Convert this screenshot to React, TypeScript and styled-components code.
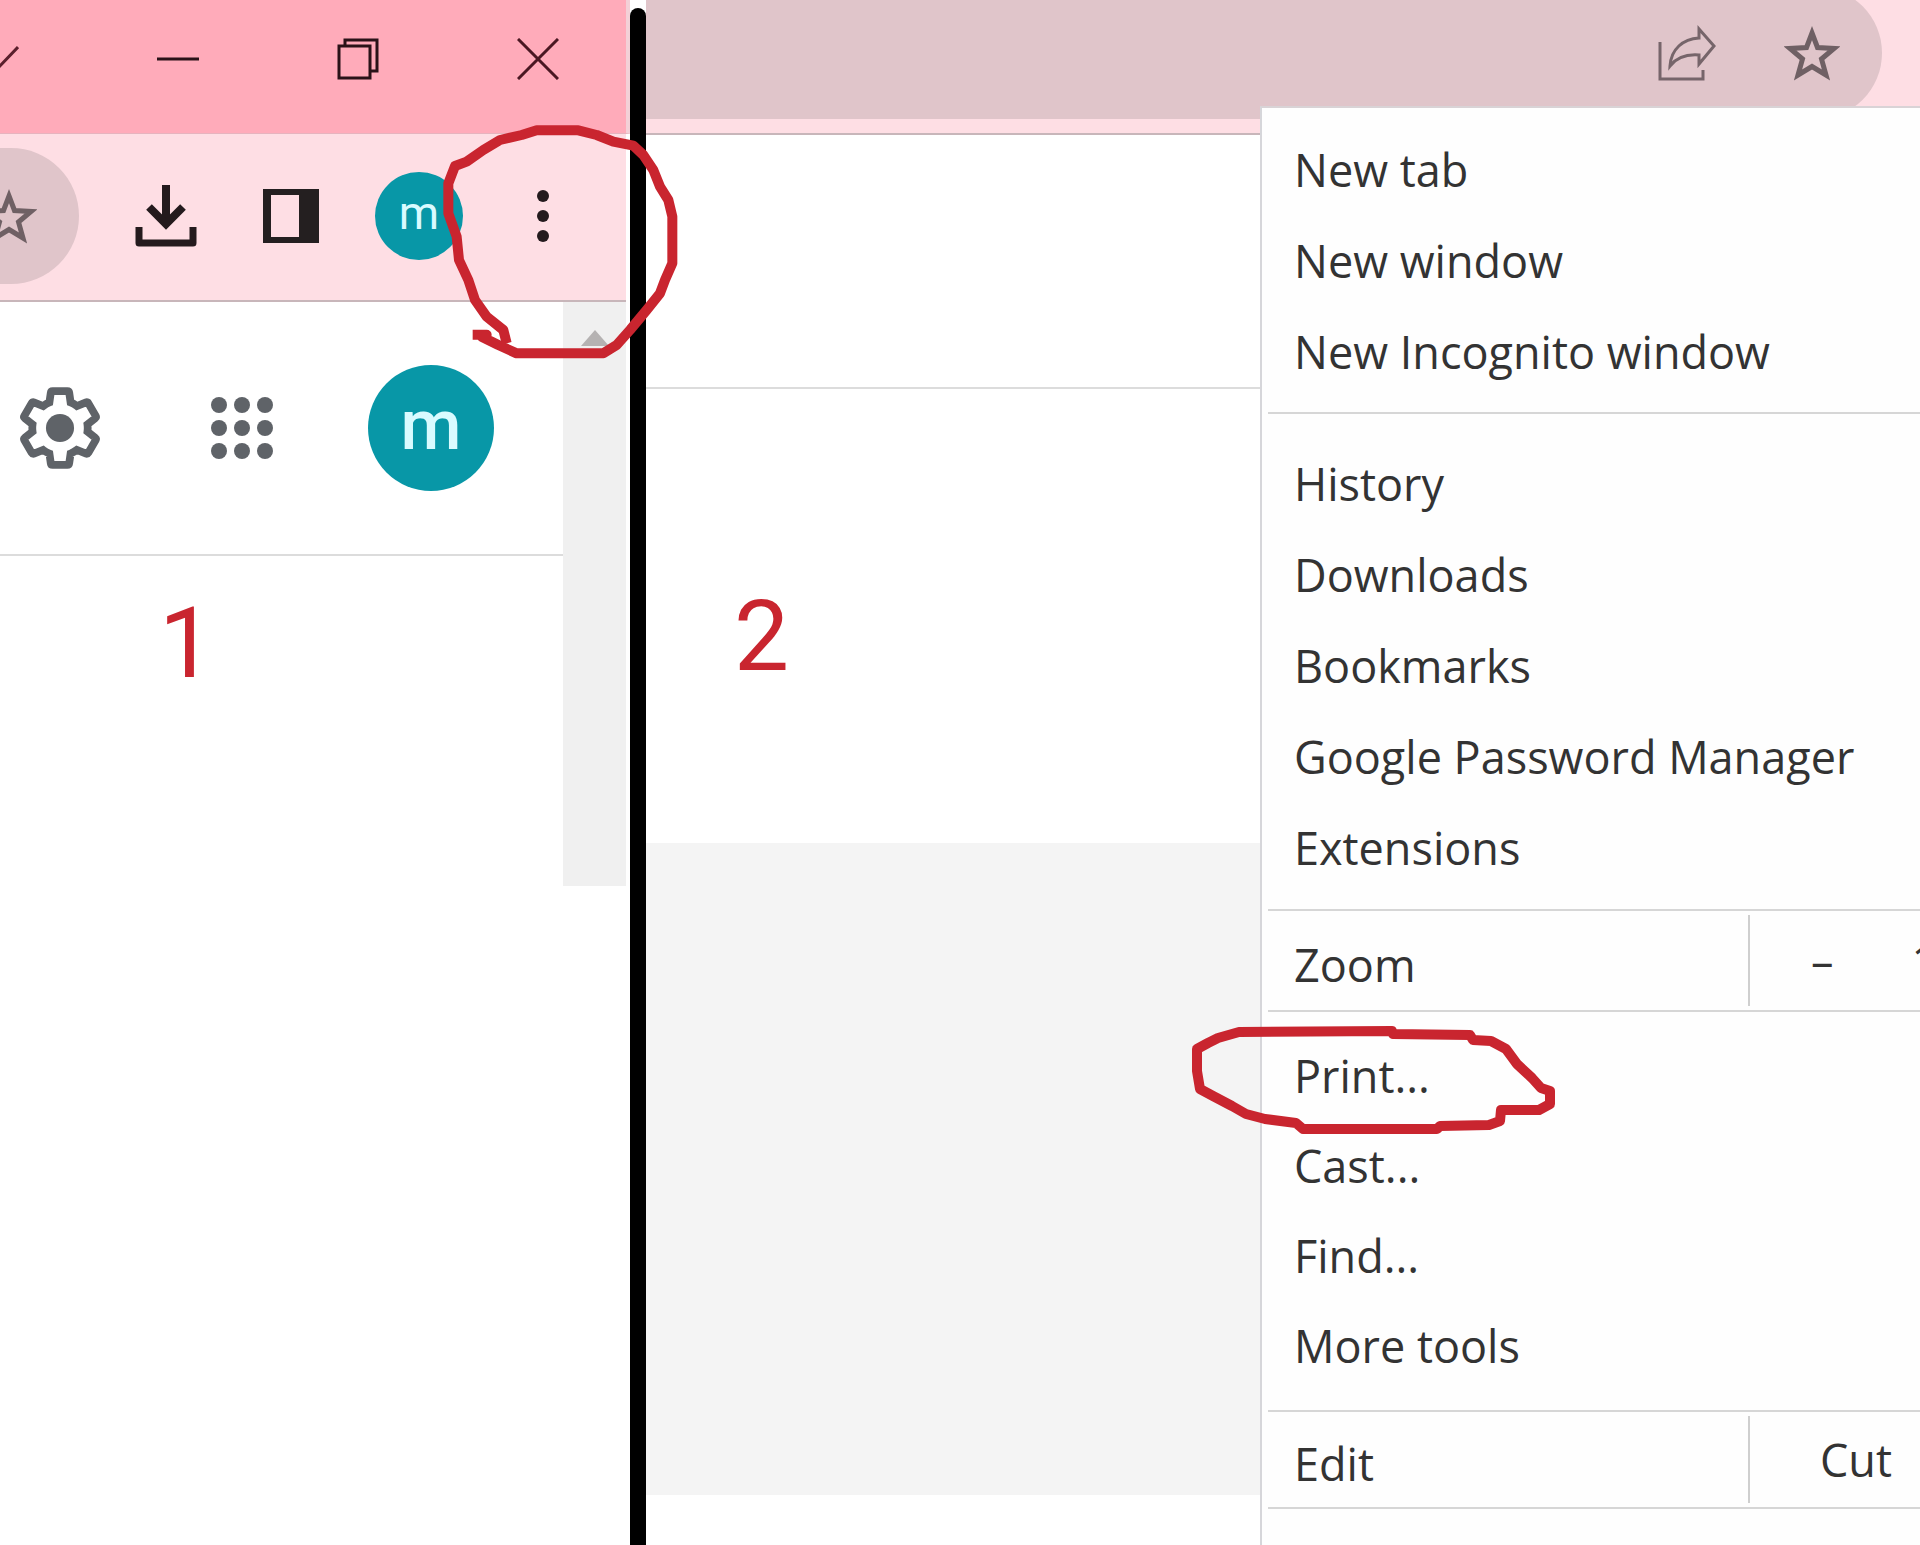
import React from "react";
import styled, { createGlobalStyle } from "styled-components";

const ink = "#c9252f";
const uiFont = `"Open Sans", "Noto Sans", sans-serif`;
const labelFont = `Roboto, "Liberation Sans", sans-serif`;

const GlobalStyle = createGlobalStyle`
  * { box-sizing: border-box; }
  body { margin: 0; background: #fff; overflow-x: hidden; }
  button { appearance: none; border: 0; padding: 0; margin: 0; background: none; color: inherit; font: inherit; cursor: pointer; }
  svg { display: block; flex: none; }
`;

const Page = styled.div`
  display: grid;
  grid-template-columns: 630fr 16px 1274fr;
  min-height: 100vh;
  overflow: hidden;
  font-family: ${uiFont};
  color: #333;
`;

const Pane = styled.section`
  position: relative;
  display: flex;
  flex-direction: column;
  min-width: 0;
`;

const Divider = styled.div`
  margin-top: 8px;
  border-radius: 8px 8px 0 0;
  background: #000;
`;

const TitleBar = styled.div`
  display: flex;
  justify-content: flex-end;
  align-items: center;
  gap: 138px;
  height: 134px;
  padding: 0 67px 16px 0;
  overflow: hidden;
  background: #ffabba;
  border-right: 4px solid #f3d0d7;
  border-bottom: 1px solid #e6b3be;
`;

const IconButton = styled.button<{ $width: number }>`
  display: flex;
  flex: none;
  justify-content: center;
  align-items: center;
  width: ${(p) => p.$width}px;
`;

const Toolbar = styled.div`
  display: flex;
  justify-content: flex-end;
  align-items: center;
  gap: 56px;
  height: 168px;
  margin-right: 4px;
  padding: 0 59px 2px 0;
  overflow: hidden;
  background: #fedee4;
  border-bottom: 2px solid #c8b6ba;
`;

const Pill = styled.div<{ $height: number; $gap?: number }>`
  display: flex;
  flex: 1 0 160px;
  justify-content: flex-end;
  align-items: center;
  gap: ${(p) => p.$gap ?? 0}px;
  height: ${(p) => p.$height}px;
  padding-right: 42px;
  border-radius: 0 68px 68px 0;
  background: #e0c5ca;
`;

const Avatar = styled.button<{ $size: number; $text: number; $weight: number }>`
  display: flex;
  flex: none;
  justify-content: center;
  align-items: center;
  width: ${(p) => p.$size}px;
  height: ${(p) => p.$size}px;
  padding-bottom: 6px;
  border-radius: 50%;
  background: #0897a7;
  color: #d9fbff;
  font: ${(p) => p.$weight} ${(p) => p.$text}px ${labelFont};
`;

const Viewport = styled.div`
  display: grid;
  grid-template-columns: 1fr 63px;
  align-items: start;
  margin-right: 4px;
`;

const AppHeader = styled.header`
  display: flex;
  justify-content: flex-end;
  align-items: center;
  gap: 70px;
  height: 254px;
  padding-right: 69px;
  overflow: hidden;
  border-bottom: 2px solid #dcdcdc;
`;

const ScrollTrack = styled.div`
  display: flex;
  justify-content: center;
  height: 584px;
  padding-top: 28px;
  background: #f0f0f0;
`;

const Step = styled.p<{ $top: number; $left: number }>`
  margin: 0;
  padding: ${(p) => p.$top}px 0 0 ${(p) => p.$left}px;
  color: ${ink};
  font: 400 98px/96px ${labelFont};
`;

const AddressBar = styled.div`
  display: flex;
  align-items: flex-end;
  height: 135px;
  padding: 0 38px 14px 0;
  overflow: hidden;
  background: #fedee4;
  border-bottom: 2px solid #c8b6ba;
`;

const SiteHeader = styled.div`
  height: 254px;
  border-bottom: 2px solid #dcdcdc;
`;

const SiteBody = styled.div`
  height: 454px;
`;

const SiteBand = styled.div`
  height: 652px;
  background: #f4f4f4;
`;

const Menu = styled.nav`
  position: absolute;
  top: 106px;
  right: 0;
  bottom: 0;
  width: 660px;
  background: #fefefe;
  border-top: 2px solid #d9d3d6;
  border-left: 2px solid #d6d6da;
  font-size: 45px;
  line-height: 64px;
`;

const Group = styled.div<{ $row: number; $pad: string }>`
  display: grid;
  grid-auto-rows: ${(p) => p.$row}px;
  padding: ${(p) => p.$pad};
`;

const Item = styled.button`
  position: relative;
  padding: 4px 0 0 32px;
  text-align: left;
  white-space: nowrap;
`;

const Rule = styled.hr`
  height: 2px;
  margin: 0 0 0 6px;
  border: 0;
  background: #d6d6d6;
`;

const SplitRow = styled.div<{ $height: number }>`
  display: grid;
  grid-template-columns: 486px 1fr;
  height: ${(p) => p.$height}px;
  padding: 4px 0;
`;

const SplitLabel = styled.span`
  align-self: center;
  padding: 8px 0 0 32px;
`;

const SplitCell = styled.div<{ $indent: number }>`
  display: flex;
  align-items: center;
  gap: 78px;
  padding-left: ${(p) => p.$indent}px;
  overflow: hidden;
  border-left: 2px solid #cfcfcf;
  white-space: nowrap;
`;

const MoreMark = styled.svg`
  position: absolute;
  top: 120px;
  right: -50px;
  z-index: 2;
  pointer-events: none;
`;

const PrintMark = styled.svg`
  position: absolute;
  top: -8px;
  left: -72px;
  pointer-events: none;
`;

const Star = ({ weight }: { weight: number }) => (
  <svg width="56" height="56" viewBox="0 0 56 56" fill="none" stroke="#6f6064" strokeWidth={weight}>
    <path d="M28 8 33.500 22.500 50 23.500 37.500 34 42 50 28 41.500 14 50 18.500 34 6 23.500 22.500 22.500Z" />
  </svg>
);

const gearPath =
  "M19.43 12.98c.04-.32.07-.64.07-.98 0-.34-.03-.66-.07-.98l2.11-1.65c.19-.15.24-.42.12-.64l-2-3.46c-.09-.16-.26-.25-.44-.25-.06 0-.12.01-.17.03l-2.49 1c-.52-.4-1.08-.73-1.69-.98l-.38-2.65C14.46 2.18 14.25 2 14 2h-4c-.25 0-.46.18-.49.42l-.38 2.65c-.61.25-1.17.59-1.69.98l-2.49-1c-.06-.02-.12-.03-.18-.03-.17 0-.34.09-.43.25l-2 3.46c-.13.22-.07.49.12.64l2.11 1.65c-.04.32-.07.65-.07.98 0 .33.03.66.07.98l-2.11 1.65c-.19.15-.24.42-.12.64l2 3.46c.09.16.26.25.44.25.06 0 .12-.01.17-.03l2.49-1c.52.4 1.08.73 1.69.98l.38 2.65c.03.24.24.42.49.42h4c.25 0 .46-.18.49-.42l.38-2.65c.61-.25 1.17-.59 1.69-.98l2.49 1c.06.02.12.03.18.03.17 0 .34-.09.43-.25l2-3.46c.12-.22.07-.49-.12-.64l-2.11-1.65z";

const dots = [9, 32, 55];

export default function App() {
  return (
    <>
      <GlobalStyle />
      <Page>
        <Pane>
          <TitleBar>
            <IconButton $width={42} aria-label="Search tabs">
              <svg width="42" height="42" viewBox="0 0 42 42" fill="none" stroke="#5a1f2c" strokeWidth="3">
                <path d="M1 9 21 30 41 9" />
              </svg>
            </IconButton>
            <IconButton $width={42} aria-label="Minimize">
              <svg width="42" height="42" viewBox="0 0 42 42" stroke="#2a1218" strokeWidth="3">
                <path d="M0 21H42" />
              </svg>
            </IconButton>
            <IconButton $width={42} aria-label="Restore">
              <svg width="42" height="42" viewBox="0 0 42 42" fill="none" stroke="#2a1218" strokeWidth="3">
                <path d="M2 8H33V40H2ZM8 8V2H40V33H33" />
              </svg>
            </IconButton>
            <IconButton $width={42} aria-label="Close">
              <svg width="42" height="42" viewBox="0 0 42 42" stroke="#4a1722" strokeWidth="3">
                <path d="M1 1 41 41M41 1 1 41" />
              </svg>
            </IconButton>
          </TitleBar>

          <Toolbar>
            <Pill $height={136}>
              <IconButton $width={56} aria-label="Bookmark this tab">
                <Star weight={5} />
              </IconButton>
            </Pill>
            <IconButton $width={72} aria-label="Downloads">
              <svg width="72" height="64" viewBox="0 0 72 64" fill="none" stroke="#241a1d" strokeWidth="8">
                <path d="M31 1V38" />
                <path d="M14 23 31 40 48 23" />
                <path d="M4 43V59H58V43" strokeWidth="7" strokeLinejoin="round" />
              </svg>
            </IconButton>
            <IconButton $width={56} aria-label="Side panel">
              <svg width="56" height="54" viewBox="0 0 56 54">
                <path fill="#241f20" fillRule="evenodd" d="M0 0H56V54H0ZM8 6V48H36V6Z" />
              </svg>
            </IconButton>
            <Avatar $size={88} $text={46} $weight={400} aria-label="Profile">m</Avatar>
            <IconButton $width={48} aria-label="Customize and control">
              <svg width="48" height="54" viewBox="0 0 48 54" fill="#241a1d">
                <circle cx="24" cy="7" r="6" />
                <circle cx="24" cy="27" r="6" />
                <circle cx="24" cy="47" r="6" />
              </svg>
            </IconButton>
          </Toolbar>

          <Viewport>
            <div>
              <AppHeader>
                <IconButton $width={112} aria-label="Settings">
                  <svg width="82" height="82" viewBox="0.9 0.9 22.2 22.2">
                    <path d={gearPath} fill="none" stroke="#5f6368" strokeWidth="2.1" />
                    <circle cx="12" cy="12" r="3.8" fill="#5f6368" />
                  </svg>
                </IconButton>
                <IconButton $width={112} aria-label="Apps">
                  <svg width="64" height="64" viewBox="0 0 64 64" fill="#5f6368">
                    {dots.map((y) => dots.map((x) => <circle key={`${x}-${y}`} cx={x} cy={y} r="8" />))}
                  </svg>
                </IconButton>
                <Avatar $size={126} $text={70} $weight={500} aria-label="Account">m</Avatar>
              </AppHeader>
              <Step $top={40} $left={159}>1</Step>
            </div>
            <ScrollTrack>
              <svg width="28" height="16" viewBox="0 0 28 16" fill="#b5b2b2">
                <path d="M14 0 28 16H0Z" />
              </svg>
            </ScrollTrack>
          </Viewport>

          <MoreMark width="240" height="240" viewBox="300 360 720 720" fill="none" stroke={ink} strokeWidth="30" strokeLinejoin="round">
            <path d="M398 1004H440L425 1010 475 1035 530 1060H790L830 1035 870 990 920 930 960 880 975 840 997 790V650L985 600 960 560 940 510 910 465 880 437 820 425 770 405 715 391H590L545 405 480 420 430 450 380 485 345 498 325 550V640L350 710 357 780 385 840 405 900 440 950 490 990 500 1030" />
          </MoreMark>
        </Pane>

        <Divider />

        <Pane>
          <AddressBar>
            <Pill $height={132} $gap={68}>
              <IconButton $width={58} aria-label="Share this page">
                <svg width="58" height="56" viewBox="0 0 58 56" fill="none" stroke="#76656a" strokeWidth="3">
                  <path d="M2 17V54H45V45" />
                  <path d="M41 4V13C25 14 13 24 12 41C19 32 28 29 41 30V39L56 21Z" />
                </svg>
              </IconButton>
              <IconButton $width={56} aria-label="Bookmark this page">
                <Star weight={5} />
              </IconButton>
            </Pill>
          </AddressBar>
          <SiteHeader />
          <SiteBody>
            <Step $top={200} $left={88}>2</Step>
          </SiteBody>
          <SiteBand />

          <Menu aria-label="Browser menu">
            <Group $row={91} $pad="14px 0 17px">
              <Item>New tab</Item>
              <Item>New window</Item>
              <Item>New Incognito window</Item>
            </Group>
            <Rule />
            <Group $row={91} $pad="22px 0 18px">
              <Item>History</Item>
              <Item>Downloads</Item>
              <Item>Bookmarks</Item>
              <Item>Google Password Manager</Item>
              <Item>Extensions</Item>
            </Group>
            <Rule />
            <SplitRow $height={99}>
              <SplitLabel>Zoom</SplitLabel>
              <SplitCell $indent={61}>
                <button aria-label="Zoom out">–</button>
                <span>100%</span>
              </SplitCell>
            </SplitRow>
            <Rule />
            <Group $row={90} $pad="17px 0 21px">
              <Item>
                Print...
                <PrintMark width="370" height="116" viewBox="1190 1020 370 116" fill="none" stroke={ink} strokeWidth="10" strokeLinejoin="round">
                  <path d="M1239 1031 1392 1030 1393 1033 1470 1034 1473 1039 1491 1040 1506 1048 1517 1063 1532 1077 1541 1087 1550 1090V1103L1539 1109H1501L1500 1120 1489 1124 1440 1125 1437 1128H1303L1296 1122 1265 1118 1246 1113 1232 1105 1213 1095 1200 1088 1197 1070V1048L1208 1042 1218 1037Z" />
                </PrintMark>
              </Item>
              <Item>Cast...</Item>
              <Item>Find...</Item>
              <Item>More tools</Item>
            </Group>
            <Rule />
            <SplitRow $height={95}>
              <SplitLabel>Edit</SplitLabel>
              <SplitCell $indent={70}>
                <button>Cut</button>
              </SplitCell>
            </SplitRow>
            <Rule />
          </Menu>
        </Pane>
      </Page>
    </>
  );
}
